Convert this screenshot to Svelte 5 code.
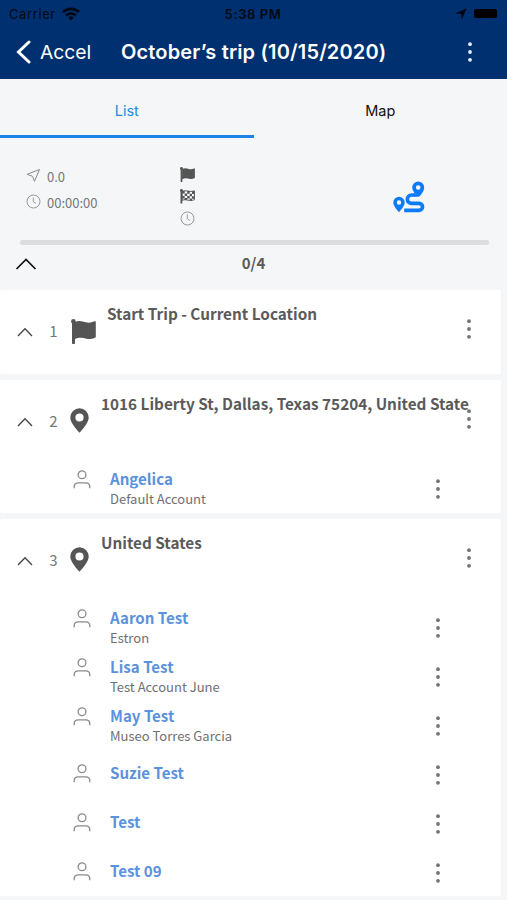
<script lang="ts">
  type Contact = { name: string; account?: string };
  type Stop = { kind: "flag" | "pin"; title: string; contacts: Contact[] };

  const stops: Stop[] = [
    { kind: "flag", title: "Start Trip - Current Location", contacts: [] },
    {
      kind: "pin",
      title: "1016 Liberty St, Dallas, Texas 75204, United State",
      contacts: [{ name: "Angelica", account: "Default Account" }],
    },
    {
      kind: "pin",
      title: "United States",
      contacts: [
        { name: "Aaron Test", account: "Estron" },
        { name: "Lisa Test", account: "Test Account June" },
        { name: "May Test", account: "Museo Torres Garcia" },
        { name: "Suzie Test" },
        { name: "Test" },
        { name: "Test 09" },
      ],
    },
  ];

  let tab = $state("list");
  let open = $state([true, true, true]);
</script>

{#snippet dots()}
  <svg class="dots" width="6" height="22" viewBox="0 0 6 22" fill="currentColor">
    <circle cx="3" cy="3.2" r="1.9" />
    <circle cx="3" cy="11" r="1.9" />
    <circle cx="3" cy="18.8" r="1.9" />
  </svg>
{/snippet}

{#snippet clock()}
  <svg width="15" height="15" viewBox="0 0 15 15" fill="none" stroke="#999" stroke-width="1">
    <circle cx="7.5" cy="7.5" r="6.5" />
    <path d="M7.3 3.4v4.3l2.6 1.7" />
  </svg>
{/snippet}

{#snippet flag(size: number)}
  <svg width={size} height={size} viewBox="0 0 25 25" fill="#555">
    <circle cx="2.4" cy="2.4" r="2.3" />
    <path d="M1 2h3v22.2a.7.7 0 0 1-.7.7H1.7a.7.7 0 0 1-.7-.7z" />
    <path
      d="M3.5 3.2C8 .8 11.5 2.4 15 3.3c3.2.8 5.8 0 8.3-1 .9-.4 1.5.1 1.5.9v14.3c0 .6-.2.9-.8 1.2-2.7 1.3-5.5 1.8-8.6 1-3.9-1-7.4-1.5-11.9.6z"
    />
  </svg>
{/snippet}

<div class="screen">
  <header>
    <div class="status">
      <span class="carrier">
        Carrier
        <svg width="18" height="14" viewBox="0 0 18 14" fill="none" stroke="#000814" stroke-width="2.6">
          <path d="M1 5.2a11.3 11.3 0 0 1 16 0" />
          <path d="M4 8.5a7.1 7.1 0 0 1 10 0" />
          <path d="M9 13.4 6.2 10.7a4 4 0 0 1 5.6 0z" fill="#000814" stroke="none" />
        </svg>
      </span>
      <b>5:38 PM</b>
      <span class="power">
        <svg width="12" height="12" viewBox="0 0 12 12" fill="#000814">
          <path d="M11.7.3 6.7 11.7 6.2 5.9.3 5.4z" />
        </svg>
        <i class="battery"></i>
      </span>
    </div>
    <div class="nav">
      <button class="back">
        <svg width="15" height="24" viewBox="0 0 15 24" fill="none" stroke="#fff" stroke-width="3">
          <path d="M13 2 2.5 12 13 22" stroke-linecap="round" />
        </svg>
        Accel
      </button>
      <h1>October’s trip (10/15/2020)</h1>
      <button class="more" aria-label="More">{@render dots()}</button>
    </div>
  </header>

  <div class="tabs">
    <button class:active={tab === "list"} onclick={() => (tab = "list")}>List</button>
    <button class:active={tab === "map"} onclick={() => (tab = "map")}>Map</button>
  </div>

  <section class="summary">
    <div class="totals">
      <div>
        <svg width="15" height="15" viewBox="0 0 15 15" fill="none" stroke="#8a8a8a" stroke-linejoin="round">
          <path d="M13.5 1.5 8.5 13.3 6.5 8.3 1.2 6.3z" />
        </svg>
        <span>0.0</span>
      </div>
      <div>{@render clock()} <span>00:00:00</span></div>
    </div>
    <div class="marks">
      {@render flag(15)}
      <svg width="15" height="15" viewBox="0 0 15 15">
        <path d="M1.4 1v13.5" stroke="#555" stroke-width="1.8" />
        <circle cx="1.4" cy="1.4" r="1.4" fill="#555" />
        <path d="M2.2 2.3c4-1.8 7 1.5 12.2-.4v8.800c-5.200 2.200-8-1.200-12.200.6z" fill="#fff" stroke="#555" />
        <path
          d="M2.2 1.9h2.5v2.5H2.2zM7.2 2h2.5v2.7H7.2zM12 2.3h2.3v2.6H12zM4.7 4.4h2.5v2.5H4.7zM9.7 4.7H12v2.5H9.7zM2.2 6.9h2.5v2.5H2.2zM7.2 7h2.5v2.5H7.2zM12 7.2h2.3v2.5H12zM4.7 9h2.5v2H4.7zM9.7 9.5H12v2.3H9.7z"
          fill="#555"
        />
      </svg>
      {@render clock()}
    </div>
    <svg class="route" width="33" height="32" viewBox="0 0 33 32" fill="none">
      <path
        d="M22 14h-3.5a4 4 0 0 0 0 8.3H26a3.5 3.5 0 0 1 0 7H11.2"
        stroke="#0b7bfa"
        stroke-width="3.7"
      />
      <path
        fill="#0b7bfa"
        fill-rule="evenodd"
        d="M25.2.5a6 6 0 0 1 6 6c0 3.4-3.2 7.7-5.3 9.3h-5.4l1.7-2.8c-1.5-2-3-4.3-3-6.5a6 6 0 0 1 6-6zm0 3.7a2.3 2.3 0 1 0 0 4.6 2.3 2.3 0 0 0 0-4.6z"
      />
      <path
        fill="#0b7bfa"
        fill-rule="evenodd"
        d="M6 15.8a5.7 5.7 0 0 1 5.7 5.7c0 3.3-3.5 7.2-5.7 9.7-2.2-2.5-5.7-6.4-5.7-9.7A5.7 5.7 0 0 1 6 15.8zm0 3.5a2.2 2.2 0 1 0 0 4.4 2.2 2.2 0 0 0 0-4.4z"
      />
    </svg>
  </section>

  <div class="progress"></div>

  <div class="count">
    <svg width="22" height="12" viewBox="0 0 22 12" fill="none" stroke="#111" stroke-width="1.7">
      <path d="m1.5 11 9.5-9.5 9.5 9.5" />
    </svg>
    <b>0/4</b>
  </div>

  {#each stops as stop, i}
    <article>
      <div class="stop">
        <button class="fold" aria-label="Toggle" onclick={() => (open[i] = !open[i])}>
          <svg width="16" height="10" viewBox="0 0 16 10" fill="none" stroke="#444" stroke-width="1.3">
            <path d="m1 9 7-7.3L15 9" />
          </svg>
        </button>
        <span class="num">{i + 1}</span>
        {#if stop.kind === "flag"}
          <span class="icon wide">{@render flag(25)}</span>
        {:else}
          <span class="icon">
            <svg width="19" height="25" viewBox="0 0 19 25" fill="#555" fill-rule="evenodd">
              <path
                d="M9.5.3a9.2 9.2 0 0 1 9.2 9.2c0 5-5.2 10.7-9.2 15.3C5.5 20.2.3 14.5.3 9.5A9.2 9.2 0 0 1 9.5.3zm0 5.1a4.1 4.1 0 1 0 0 8.2 4.1 4.1 0 0 0 0-8.2z"
              />
            </svg>
          </span>
        {/if}
        <h2>{stop.title}</h2>
        <button class="more" aria-label="Stop menu">{@render dots()}</button>
      </div>
      {#if open[i]}
        {#each stop.contacts as contact}
          <div class="contact" class:single={!contact.account}>
            <svg class="person" width="18" height="19" viewBox="0 0 18 19" fill="none" stroke="#8a8a8a" stroke-width="1.3">
              <circle cx="9" cy="4.8" r="3.9" />
              <path d="M1.2 18.3v-1.5c0-2.5 1.4-4 4-4h7.6c2.6 0 4 1.5 4 4v1.5" />
            </svg>
            <div class="who">
              <strong>{contact.name}</strong>
              {#if contact.account}<small>{contact.account}</small>{/if}
            </div>
            <button class="more" aria-label="Contact menu">{@render dots()}</button>
          </div>
        {/each}
      {/if}
    </article>
  {/each}
</div>

<style>
  .screen {
    height: 900px;
    overflow: hidden;
    background: #f4f6f8;
    color: #5a5a5a;
    font-family: "Noto Sans CJK SC", sans-serif;
  }

  svg {
    display: block;
    flex: none;
  }

  button {
    margin: 0;
    padding: 0;
    border: 0;
    background: none;
    color: inherit;
    font: inherit;
  }

  header {
    height: 79px;
    background: #003070;
    font-family: Inter, sans-serif;
  }

  .status {
    display: grid;
    grid-template-columns: 1fr auto 1fr;
    align-items: center;
    height: 27px;
    padding: 0 10px 0 9px;
    color: #000814;
    font-size: 13px;
  }
  .status b {
    font-weight: 600;
    letter-spacing: 0.6px;
  }
  .carrier,
  .power {
    display: flex;
    align-items: center;
    gap: 6px;
  }
  .carrier {
    letter-spacing: 0.6px;
  }
  .power {
    justify-content: flex-end;
    gap: 7px;
  }
  .battery {
    width: 23px;
    height: 9px;
    border-radius: 2px;
    background: #000;
  }

  .nav {
    display: flex;
    align-items: center;
    height: 50px;
    padding: 0 34px 0 16px;
    color: #fff;
  }
  .back {
    display: flex;
    align-items: center;
    gap: 9px;
    width: 105px;
    font-size: 19.3px;
  }
  h1 {
    flex: 1;
    margin: 0;
    font-size: 20px;
    font-weight: 600;
    letter-spacing: 0.16px;
    white-space: nowrap;
  }
  .nav .more {
    color: #e6edf6;
  }

  .tabs {
    display: flex;
    height: 59px;
    font-family: Inter, sans-serif;
    font-size: 14.5px;
    color: #111;
  }
  .tabs button {
    flex: 1;
    padding-top: 6px;
    border-bottom: 3px solid transparent;
  }
  .tabs .active {
    color: #2589e0;
    border-color: #1b84e4;
  }

  .summary {
    display: flex;
    height: 102px;
    padding: 0 20px 0 26px;
    font-size: 13px;
    color: #777;
  }
  .totals {
    width: 154px;
    padding-top: 24px;
  }
  .totals div {
    display: flex;
    align-items: center;
    gap: 6px;
    height: 26px;
  }
  .totals span {
    padding-top: 2px;
  }
  .marks {
    display: flex;
    flex-direction: column;
    gap: 7px;
    width: 213px;
    padding-top: 29px;
  }
  .route {
    margin-top: 43px;
  }

  .progress {
    height: 5px;
    margin: 0 18px 0 20px;
    border-radius: 2px;
    background: #dcdddf;
  }

  .count {
    display: grid;
    grid-template-columns: 1fr auto 1fr;
    align-items: center;
    height: 38px;
    margin-bottom: 7px;
    padding: 0 15px;
    font-size: 15px;
  }
  .count b {
    margin-top: -3px;
  }

  article {
    width: 501px;
    margin-bottom: 6px;
    border-radius: 2px;
    background: #fff;
  }
  article:last-child {
    height: 377px;
  }
  .stop {
    display: flex;
    align-items: center;
    height: 84px;
    padding: 0 29px 0 17px;
  }
  .num {
    width: 35px;
    margin-top: -3px;
    padding-left: 2px;
    box-sizing: border-box;
    text-align: center;
    font-size: 15px;
    color: #777;
  }
  .fold {
    width: 18px;
  }
  .icon {
    width: 31px;
    margin-top: -3px;
  }
  .icon.wide {
    width: 37px;
    margin-top: -2px;
    padding-left: 1px;
    box-sizing: border-box;
  }
  h2 {
    flex: 1;
    width: 0;
    align-self: flex-start;
    margin: 11px 0 0;
    font-size: 15.3px;
    font-weight: 700;
    line-height: 24px;
    white-space: nowrap;
  }
  article .more {
    color: #737373;
  }
  .stop .more {
    margin-top: -7px;
  }

  .contact {
    display: flex;
    height: 49px;
    padding: 0 60px 0 73px;
  }
  .person {
    margin-top: 6px;
  }
  .who {
    flex: 1;
    padding: 4px 0 0 19px;
  }
  .who strong,
  .who small {
    display: block;
    line-height: 20px;
  }
  .who strong {
    color: #5b92dc;
    font-size: 15.1px;
  }
  .who small {
    margin-top: 1px;
    color: #707070;
    font-size: 13px;
  }
  .single .person {
    margin-top: 14px;
  }
  .single .who {
    padding-top: 12px;
  }
</style>
